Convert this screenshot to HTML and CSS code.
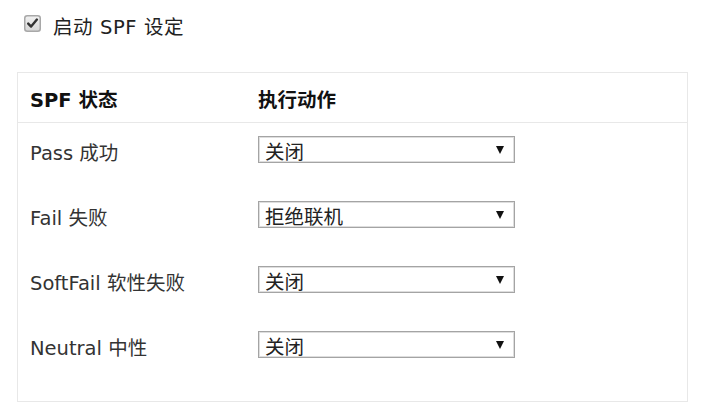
FILE: index.html
```html
<!DOCTYPE html>
<html lang="zh">
<head>
<meta charset="utf-8">
<link rel="stylesheet" href="styles.css">
</head>
<body>
<div class="page">
  <label class="enable">
    <input type="checkbox" class="native" checked>
    <svg class="box" width="17" height="17" viewBox="0 0 17 17" aria-hidden="true">
      <defs>
        <linearGradient id="cbg" x1="0" y1="0" x2="0" y2="1">
          <stop offset="0" stop-color="#f1f1f1"/>
          <stop offset="1" stop-color="#d6d6d6"/>
        </linearGradient>
      </defs>
      <rect x="0.75" y="0.75" width="15.5" height="15.5" rx="2.5" fill="url(#cbg)" stroke="#a8a8a8" stroke-width="1.5"/>
      <path d="M4.2 8.6 L7.1 11.6 L12.9 4.6" fill="none" stroke="#333" stroke-width="2.4" stroke-linecap="round" stroke-linejoin="round"/>
    </svg>
    <span class="enable-text">启动 SPF 设定</span>
  </label>
  <div class="panel">
    <div class="head">
      <div class="col-a">SPF 状态</div>
      <div class="col-b">执行动作</div>
    </div>
    <div class="rows">
      <div class="row">
        <div class="col-a label">Pass 成功</div>
        <div class="col-b"><div class="sel"><select><option>关闭</option></select><span class="arrow"></span></div></div>
      </div>
      <div class="row">
        <div class="col-a label">Fail 失败</div>
        <div class="col-b"><div class="sel"><select><option>拒绝联机</option></select><span class="arrow"></span></div></div>
      </div>
      <div class="row">
        <div class="col-a label">SoftFail 软性失败</div>
        <div class="col-b"><div class="sel"><select><option>关闭</option></select><span class="arrow"></span></div></div>
      </div>
      <div class="row">
        <div class="col-a label">Neutral 中性</div>
        <div class="col-b"><div class="sel"><select><option>关闭</option></select><span class="arrow"></span></div></div>
      </div>
    </div>
  </div>
</div>
</body>
</html>
```
FILE: styles.css
```css
html, body {
  margin: 0;
  padding: 0;
  background: #fff;
}
body {
  font-family: "DejaVu Sans", "Noto Sans CJK SC", sans-serif;
  font-size: 19.5px;
  color: #333;
}
.page {
  padding: 11px 17px 0 17px;
  width: 671px;
}
.enable {
  display: flex;
  align-items: center;
  height: 24px;
  padding-left: 7px;
}
.native {
  position: absolute;
  opacity: 0;
  width: 0;
  height: 0;
  margin: 0;
}
.box {
  display: block;
  flex: none;
}
.enable-text {
  margin-left: 12px;
  color: #222;
  position: relative;
  top: 2px;
  letter-spacing: 0.6px;
}
.panel {
  margin-top: 37px;
  border: 1px solid #e8e8e8;
  height: 328px;
  box-sizing: content-box;
}
.head {
  display: flex;
  align-items: center;
  height: 50px;
  border-bottom: 1px solid #e8e8e8;
  font-weight: bold;
  color: #111;
  padding-top: 1px;
  box-sizing: border-box;
}
.col-a {
  width: 240px;
  padding-left: 12px;
  box-sizing: border-box;
  flex: none;
}
.col-b {
  flex: 1;
}
.label {
  position: relative;
  top: 2px;
}
.rows {
  padding-top: 13px;
  display: flex;
  flex-direction: column;
  gap: 38px;
}
.row {
  display: flex;
  align-items: center;
  height: 27px;
}
.sel {
  position: relative;
  width: 257px;
  height: 27px;
}
.sel select {
  appearance: none;
  -webkit-appearance: none;
  width: 100%;
  height: 100%;
  margin: 0;
  border: 1px solid #a4a4a4;
  border-radius: 0;
  background: #fff;
  font-family: "DejaVu Sans", "Noto Sans CJK SC", sans-serif;
  font-size: 19.5px;
  line-height: 27px;
  color: #222;
  padding: 2px 0 0 6px;
  box-sizing: border-box;
  box-shadow: inset 0 0 0 1px #dedede;
}
.arrow {
  position: absolute;
  right: 11px;
  top: 10px;
  width: 0;
  height: 0;
  border-left: 4px solid transparent;
  border-right: 4px solid transparent;
  border-top: 8px solid #111;
  pointer-events: none;
}
```
